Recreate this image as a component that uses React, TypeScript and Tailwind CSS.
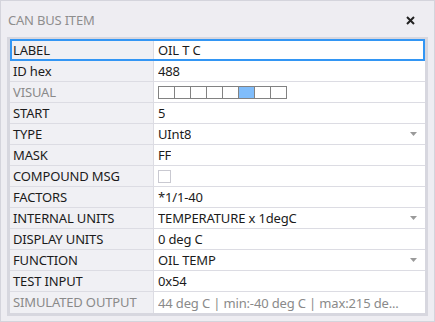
import React from "react";

type Row = {
  label: string;
  value?: string;
  kind?: "text" | "bits" | "check" | "select";
  muted?: boolean;
  focused?: boolean;
};

const rows: Row[] = [
  { label: "LABEL", value: "OIL T C", focused: true },
  { label: "ID hex", value: "488" },
  { label: "VISUAL", kind: "bits", muted: true },
  { label: "START", value: "5" },
  { label: "TYPE", value: "UInt8", kind: "select" },
  { label: "MASK", value: "FF" },
  { label: "COMPOUND MSG", kind: "check" },
  { label: "FACTORS", value: "*1/1-40" },
  { label: "INTERNAL UNITS", value: "TEMPERATURE x 1degC", kind: "select" },
  { label: "DISPLAY UNITS", value: "0 deg C" },
  { label: "FUNCTION", value: "OIL TEMP", kind: "select" },
  { label: "TEST INPUT", value: "0x54" },
  {
    label: "SIMULATED OUTPUT",
    value: "44 deg C | min:-40 deg C | max:215 de...",
    muted: true,
  },
];

const Bits: React.FC<{ active: number }> = ({ active }) => (
  <div className="flex">
    {Array.from({ length: 8 }).map((_, i) => (
      <div
        key={i}
        className={`w-[17px] h-[13px] border border-[#828282] -ml-px first:ml-0 ${
          i === active ? "bg-[#80bdfb]" : "bg-white"
        }`}
      />
    ))}
  </div>
);

const Caret = () => (
  <svg width="7" height="4" viewBox="0 0 7 4" className="shrink-0">
    <path d="M0 0h7L3.5 4z" fill="#9a9a9a" />
  </svg>
);

export default function App() {
  return (
    <div className="w-[435px] h-[322px] bg-[#eeedf2] border border-[#d4d4dc] font-['Noto_Sans',sans-serif] text-[13px] tracking-[-0.15px] text-[#1b1b1b] flex flex-col">
      <div className="h-[36px] shrink-0 flex items-center justify-between pt-[3px] pl-[7px] pr-[19px]">
        <span className="text-[#8e8e8e] text-[13px] tracking-[-0.2px]">CAN BUS ITEM</span>
        <svg width="9" height="9" viewBox="0 0 9 9">
          <path d="M1 1l7 7M8 1L1 8" stroke="#222" strokeWidth="2" />
        </svg>
      </div>
      <div className="mx-[6px] border-[3px] border-[#d7d7df] bg-white">
        {rows.map((r, idx) => (
          <div
            key={r.label}
            className={`relative flex h-[21px] leading-[20px] ${
              idx < rows.length - 1 ? "border-b border-[#dcdce3]" : ""
            }`}
          >
            <div
              className={`w-[144px] shrink-0 bg-[#f0f0f4] border-r border-[#dcdce3] pl-[3px] whitespace-nowrap overflow-hidden ${
                r.muted ? "text-[#8a8a8a]" : ""
              }`}
            >
              {r.label}
            </div>
            <div
              className={`flex-1 min-w-0 flex items-center justify-between pl-[4px] pr-[8px] ${
                r.muted ? "text-[#8a8a8a]" : ""
              }`}
            >
              {r.kind === "bits" ? (
                <Bits active={5} />
              ) : r.kind === "check" ? (
                <div className="w-[13px] h-[13px] border border-[#c9c9d1] bg-white" />
              ) : (
                <span className="truncate">{r.value}</span>
              )}
              {r.kind === "select" && <Caret />}
            </div>
            {r.focused && (
              <div className="absolute -inset-y-px inset-x-0 border-2 border-[#3396f4] pointer-events-none" />
            )}
          </div>
        ))}
      </div>
    </div>
  );
}
